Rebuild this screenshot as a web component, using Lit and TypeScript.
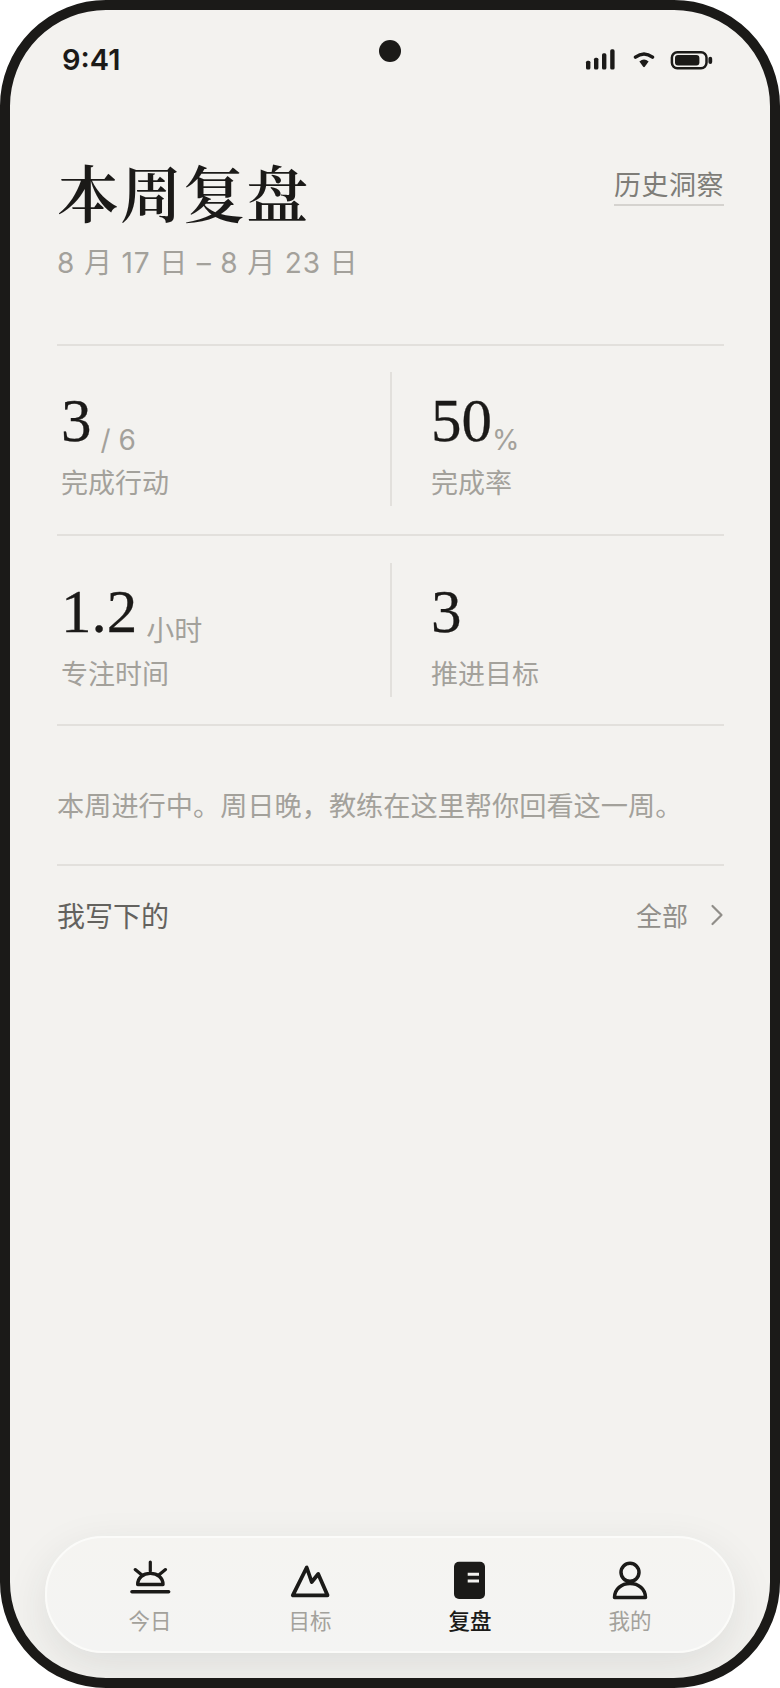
import { LitElement, html, css, svg } from "lit";
import { customElement } from "lit/decorators.js";

const SANS = css`"Inter", "Noto Sans CJK SC", sans-serif`;
const CJK = css`"Noto Sans CJK SC", "Noto Sans", sans-serif`;
const SERIF = css`"Noto Serif CJK SC", "Liberation Serif", "Noto Sans CJK SC", serif`;

const tabs = [
  { label: "今日", active: false, icon: svg`<path d="M6 33.7H42.6" stroke-width="3.6"/><path d="M11.7 26.5H37C37 19.5 31.5 15.4 24.35 15.4S11.7 19.5 11.7 26.5Z" stroke-width="3.4"/><path d="M24.3 4V13M9.2 11.6L15.6 16.8M39.5 11.6L33.1 16.8" stroke-width="3.2"/>` },
  { label: "目标", active: false, icon: svg`<path d="M6.8 37.3H41.5L32.2 16L25.7 24L20.7 9.5Z" stroke-width="3.8"/>` },
  { label: "复盘", active: true, icon: svg`<rect x="8" y="3.7" width="31" height="37.3" rx="5" fill="#1b1a18" stroke="none"/><path d="M21.7 16.3H33M21.7 23H33" stroke="#f4f3f0" stroke-width="3" stroke-linecap="butt"/>` },
  { label: "我的", active: false, icon: svg`<circle cx="24" cy="14.3" r="9" stroke-width="3.5"/><path d="M8.5 39.6C8.5 31 15.5 25.5 24 25.5S39.5 31 39.5 39.6Z" stroke-width="3.5"/>` },
];

const stats = [
  { v: "3", u: "/ 6", cls: "gap", l: "完成行动" },
  { v: "50", u: "%", cls: "", l: "完成率" },
  { v: "1.2", u: "小时", cls: "gap", l: "专注时间" },
  { v: "3", u: "", cls: "", l: "推进目标" },
];

@customElement("app-root")
export class AppRoot extends LitElement {
  static styles = css`
    :host {
      display: block;
      width: 780px;
      height: 1688px;
      background: #fff;
      font-family: ${SANS};
    }
    .screen {
      box-sizing: border-box;
      width: 780px;
      height: 1688px;
      border: 10px solid #1b1a18;
      border-radius: 106px;
      background: #f3f2ef;
      display: flex;
      flex-direction: column;
      overflow: hidden;
    }
    .status {
      position: relative;
      height: 80px;
      flex: none;
      display: flex;
      align-items: center;
      justify-content: space-between;
      padding: 20px 56px 0 52px;
      box-sizing: border-box;
    }
    .time {
      font: 600 29px/36px ${SANS};
      color: #1b1a18;
    }
    .camera {
      position: absolute;
      left: 369px;
      top: 30px;
      width: 22px;
      height: 22px;
      border-radius: 50%;
      background: #1b1a18;
    }
    .sysicons { display: block; }
    main {
      flex: 1;
      padding: 0 46px 0 47px;
      min-height: 0;
    }
    .head {
      display: flex;
      justify-content: space-between;
      align-items: flex-start;
      padding-top: 66px;
    }
    h1 {
      margin: 0;
      font: 600 62px/72px ${SERIF};
      color: #1b1a18;
      letter-spacing: 1px;
    }
    .link {
      margin-top: 10px;
      font: 400 27px/36px ${CJK};
      letter-spacing: 0.5px;
      color: #7e7d78;
      padding-bottom: 2px;
      border-bottom: 2px solid #d5d3cf;
    }
    .date {
      margin-top: 17px;
      font: 400 28px/36px ${SANS};
      letter-spacing: 0.85px;
      color: #a3a19b;
    }
    .grid {
      margin-top: 63px;
      border-top: 2px solid #e2e0dc;
      display: grid;
      grid-template-columns: 333px 1fr;
    }
    .cell {
      border-bottom: 2px solid #e2e0dc;
      padding: 26px 0 28px;
    }
    .cell:nth-child(n + 3) { padding: 27px 0; }
    .inner { height: 134px; padding-left: 4px; box-sizing: border-box; }
    .cell:nth-child(even) .inner { border-left: 2px solid #e2e0dc; padding-left: 39px; }
    .value {
      display: flex;
      align-items: flex-end;
      box-sizing: border-box;
      height: 88px;
      padding-top: 10px;
      color: #1b1a18;
      font: 400 61px/78px "Liberation Serif", serif;
      -webkit-text-stroke: 0.3px #1b1a18;
    }
    .unit {
      font: 400 28px/36px ${SANS};
      -webkit-text-stroke: 0;
      color: #a3a19b;
      position: relative;
      top: -2px;
    }
    .unit.gap { margin-left: 9px; }
    .label {
      font: 400 27px/36px ${CJK};
      color: #a3a19b;
      margin-top: 4px;
    }
    .note {
      margin: 0;
      padding: 59px 0 41px;
      font: 400 27.2px/38px ${CJK};
      color: #a3a19b;
      border-bottom: 2px solid #e2e0dc;
    }
    .row {
      display: flex;
      align-items: center;
      justify-content: space-between;
      height: 98px;
    }
    .row .t { font: 400 28px/38px ${CJK}; color: #63625e; }
    .all { display: flex; align-items: center; gap: 22px; font: 400 26px/38px ${CJK}; color: #908e89; }
    .all svg { display: block; }
    nav {
      flex: none;
      box-sizing: border-box;
      height: 117px;
      margin: 0 35px 25px;
      padding: 20px 23px 0;
      border: 2px solid #fbfbf9;
      border-radius: 58px;
      background: linear-gradient(#f5f4f1, #f4f4f3);
      box-shadow: 0 14px 44px rgba(40, 48, 48, 0.1);
      display: grid;
      grid-template-columns: repeat(4, 1fr);
    }
    .tab { display: flex; flex-direction: column; align-items: center; }
    .tab svg { display: block; fill: none; stroke: #1b1a18; stroke-linecap: round; stroke-linejoin: round; }
    .tab span { font: 400 21.5px/28px ${CJK}; color: #a3a19b; }
    .tab.on span { color: #1b1a18; font-weight: 500; }
  `;

  render() {
    return html`
      <div class="screen">
        <div class="status">
          <span class="time">9:41</span>
          <div class="camera"></div>
          <svg class="sysicons" width="130" height="22" viewBox="584 49 130 22" fill="#1b1a18">
            <rect x="586" y="60.7" width="4.4" height="8.9" rx="1.6"/>
            <rect x="594" y="57.7" width="4.4" height="11.9" rx="1.6"/>
            <rect x="602" y="53.3" width="4.4" height="16.3" rx="1.6"/>
            <rect x="610.2" y="49.3" width="4.4" height="20.3" rx="1.6"/>
            <path d="M635.5 57.2Q644 50.6 652.5 57.2" fill="none" stroke="#1b1a18" stroke-width="3.4" stroke-linecap="round"/>
            <path d="M639.4 61.4Q644 57.8 648.6 61.4L644.8 66.8Q644 67.6 643.2 66.8Z"/>
            <rect x="671.9" y="52.2" width="34.6" height="16" rx="5.4" fill="none" stroke="#1b1a18" stroke-width="2.5"/>
            <rect x="675" y="55" width="24.4" height="10.4" rx="3"/>
            <rect x="708.4" y="56.8" width="3.8" height="7.2" rx="1.9"/>
          </svg>
        </div>
        <main>
          <div class="head">
            <h1>本周复盘</h1>
            <span class="link">历史洞察</span>
          </div>
          <div class="date">8 月 17 日 – 8 月 23 日</div>
          <div class="grid">
            ${stats.map(
              (s) => html`<div class="cell"><div class="inner">
                <div class="value">${s.v}${s.u ? html`<span class="unit ${s.cls}">${s.u}</span>` : ""}</div>
                <div class="label">${s.l}</div>
              </div></div>`
            )}
          </div>
          <p class="note">本周进行中。周日晚，教练在这里帮你回看这一周。</p>
          <div class="row">
            <span class="t">我写下的</span>
            <span class="all">全部
              <svg width="14" height="24" viewBox="0 0 14 24" fill="none" stroke="#908e89" stroke-width="2.2" stroke-linecap="round" stroke-linejoin="round"><path d="M2.5 3L11.5 12L2.5 21"/></svg>
            </span>
          </div>
        </main>
        <nav>
          ${tabs.map(
            (t) => html`<div class="tab ${t.active ? "on" : ""}">
              <svg width="48" height="48" viewBox="0 0 48 48">${t.icon}</svg>
              <span>${t.label}</span>
            </div>`
          )}
        </nav>
      </div>
    `;
  }
}
